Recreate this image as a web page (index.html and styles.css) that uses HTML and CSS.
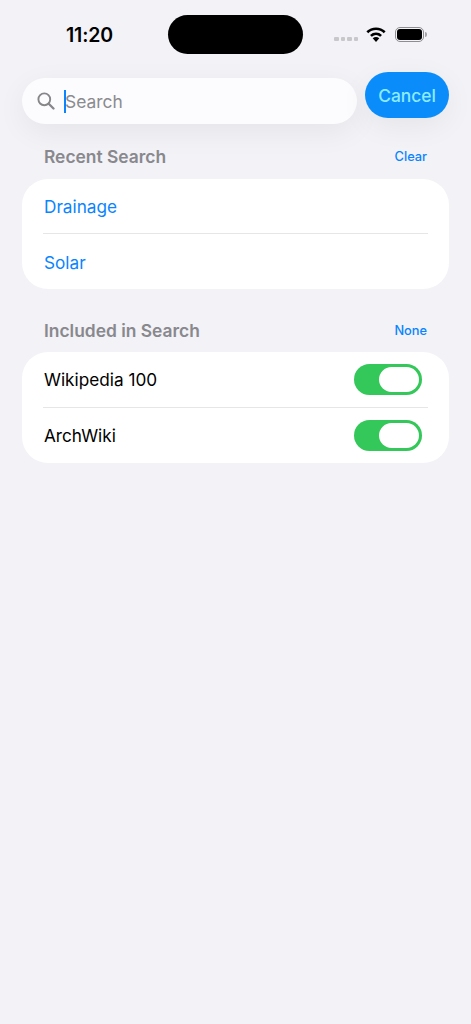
FILE: index.html
```html
<!DOCTYPE html>
<html lang="en">
<head>
    <meta charset="UTF-8">
    <meta name="viewport" content="width=device-width, initial-scale=1.0">
    <title>Search</title>
    <link rel="stylesheet" href="styles.css">
</head>
<body>
    <div class="status-bar">
        <span class="time">11:20</span>
        <div class="island"></div>
        <div class="status-icons">
            <div class="signal"><i></i><i></i><i></i><i></i></div>
            <svg class="wifi" width="20" height="15" viewBox="0 0 20 15">
                <path d="M1.300 5.300C6.200 0.500 13.800 0.500 18.700 5.300" fill="none" stroke="#000" stroke-width="2.600"/>
                <path d="M4.900 8.900C7.900 6.100 12.100 6.100 15.100 8.900" fill="none" stroke="#000" stroke-width="2.600"/>
                <path d="M6.700 11.200C8.700 9.500 11.300 9.500 13.300 11.200L10 15z" fill="#000"/>
            </svg>
            <div class="battery"><div class="battery-level"></div></div>
            <div class="battery-cap"></div>
        </div>
    </div>

    <div class="search-row">
        <div class="search-box">
            <svg class="search-icon" width="18" height="18" viewBox="0 0 18 18">
                <circle cx="7.300" cy="7.300" r="5.900" fill="none" stroke="#86868b" stroke-width="1.900"/>
                <path d="M11.700 11.700L16.500 16.500" stroke="#86868b" stroke-width="2.300" stroke-linecap="round"/>
            </svg>
            <span class="caret"></span>
            <span class="placeholder">Search</span>
        </div>
        <button class="cancel">Cancel</button>
    </div>

    <section class="group">
        <div class="group-header">
            <h2>Recent Search</h2>
            <a class="header-action">Clear</a>
        </div>
        <div class="card">
            <div class="row link first-link">Drainage</div>
            <div class="row link last-link">Solar</div>
        </div>
    </section>

    <section class="group">
        <div class="group-header">
            <h2>Included in Search</h2>
            <a class="header-action">None</a>
        </div>
        <div class="card">
            <div class="row">
                <span>Wikipedia 100</span>
                <div class="toggle"><div class="knob"></div></div>
            </div>
            <div class="row">
                <span>ArchWiki</span>
                <div class="toggle"><div class="knob"></div></div>
            </div>
        </div>
    </section>
</body>
</html>
```

FILE: styles.css
```css
body {
    font-family: Inter, "Liberation Sans", sans-serif;
    background-color: #f2f2f7;
    color: #000000;
    margin: 0;
    height: 1024px;
    overflow: hidden;
}
.status-bar {
    display: flex;
    align-items: center;
    height: 39px;
    padding: 15px 0 0 66px;
}
.time {
    width: 102px;
    font-size: 19.5px;
    font-weight: 600;
    letter-spacing: -0.15px;
}
.island {
    width: 135px;
    height: 39px;
    border-radius: 20px;
    background: #000000;
}
.status-icons {
    display: flex;
    align-items: center;
    margin-left: 31px;
}
.signal {
    display: flex;
    gap: 2px;
    margin-top: 9px;
}
.signal i {
    width: 4.500px;
    height: 4.500px;
    border-radius: 1px;
    background: #c8c8cb;
}
.wifi {
    margin: 0 0 0 8px;
}
.battery {
    width: 29px;
    height: 15px;
    box-sizing: border-box;
    margin-left: 9px;
    padding: 1px;
    border: 1px solid #8e8e92;
    border-radius: 5px;
}
.battery-level {
    height: 100%;
    border-radius: 3px;
    background: #000000;
}
.battery-cap {
    width: 2px;
    height: 5px;
    margin-left: 1px;
    border-radius: 0 2px 2px 0;
    background: #a5a5a8;
}
.search-row {
    display: flex;
    align-items: flex-start;
    gap: 8px;
    margin: 18px 22px 0;
}
.search-box {
    flex: 1;
    display: flex;
    align-items: center;
    height: 46px;
    margin-top: 6px;
    padding-left: 15px;
    border-radius: 23px;
    background: #fcfcfe;
    box-shadow: 0 8px 30px rgba(0, 0, 0, 0.06);
}
.search-icon {
    margin-right: 9px;
}
.caret {
    width: 2px;
    height: 23px;
    background: #0a84ff;
}
.placeholder {
    margin-left: -1px;
    font-size: 17.400px;
    color: #8b8b8f;
}
.cancel {
    width: 84px;
    height: 46px;
    padding: 0;
    border: none;
    border-radius: 23px;
    background: #0a8dfb;
    color: #8cecff;
    font-family: inherit;
    font-size: 17.400px;
    font-weight: 500;
    box-shadow: 0 8px 30px rgba(0, 0, 0, 0.06);
}
.group {
    margin: 0 22px;
}
.group + .group {
    margin-top: 31px;
}
.search-row + .group {
    margin-top: 22px;
}
.group-header {
    display: flex;
    justify-content: space-between;
    align-items: center;
    height: 21px;
    padding: 0 22px;
    margin-bottom: 12px;
}
.group + .group .group-header {
    margin-bottom: 11px;
}
h2 {
    margin: 0;
    font-size: 17.400px;
    font-weight: 600;
    color: #88888d;
}
.header-action {
    font-size: 12.800px;
    font-weight: 500;
    color: #0a84ff;
}
.card {
    border-radius: 26px;
    background: #ffffff;
}
.row {
    display: flex;
    justify-content: space-between;
    align-items: center;
    height: 55px;
    margin: 0 21px;
    padding: 0 6px 0 1px;
    font-size: 17.200px;
}
.row + .row {
    border-top: 1px solid #e6e6e9;
}
.link {
    color: #0a84ff;
}
.first-link {
    height: 53px;
    padding-top: 1px;
}
.last-link {
    height: 54px;
    padding-top: 1px;
}
.toggle {
    width: 68px;
    height: 31px;
    box-sizing: border-box;
    padding: 3px 3px 3px 2px;
    display: flex;
    justify-content: flex-end;
    border-radius: 16px;
    background: #34c759;
}
.knob {
    width: 40px;
    height: 25px;
    border-radius: 13px;
    background: #ffffff;
}
```
